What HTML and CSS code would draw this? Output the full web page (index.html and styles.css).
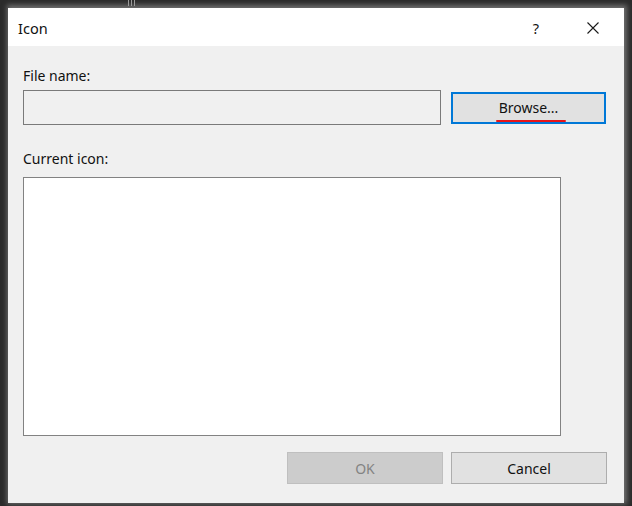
FILE: index.html
```html
<!DOCTYPE html>
<html>
<head>
<meta charset="utf-8">
<link rel="stylesheet" href="styles.css">
</head>
<body>
<div class="screen">
  <div class="grip"><span></span><span></span><span></span></div>
  <div class="dialog">
    <div class="titlebar">
      <div class="title">Icon</div>
      <div class="title-actions">
        <span class="help">?</span>
        <svg class="close" width="12" height="12" viewBox="0 0 12 12"><path d="M0.5 0.5 L11.5 11.5 M11.5 0.5 L0.5 11.5" stroke="#1a1a1a" stroke-width="1.1" fill="none"/></svg>
      </div>
    </div>
    <div class="content">
      <div class="label first">File name:</div>
      <div class="file-row">
        <div class="input"></div>
        <button class="btn focused"><span class="underline">Browse...</span></button>
      </div>
      <div class="label second">Current icon:</div>
      <div class="icon-box"></div>
      <div class="actions">
        <button class="btn disabled">OK</button>
        <button class="btn">Cancel</button>
      </div>
    </div>
  </div>
</div>
</body>
</html>
```
FILE: styles.css
```css
html, body {
  margin: 0;
  padding: 0;
  background: #2b2b2b;
}
.screen {
  position: relative;
  width: 632px;
  height: 506px;
  padding: 8px 0 0 8px;
  box-sizing: border-box;
  font-family: "Noto Sans", "Open Sans", sans-serif;
  color: #111111;
}
.grip {
  position: absolute;
  left: 128px;
  top: 0;
  display: flex;
  gap: 2px;
}
.grip span {
  display: block;
  width: 1px;
  height: 6px;
  background: #9a9a9a;
}
.dialog {
  width: 616px;
  height: 495px;
  background: #f0f0f0;
  box-shadow: 1px -1px 5px 2px rgba(170,170,170,0.55);
  display: flex;
  flex-direction: column;
}
.titlebar {
  height: 38px;
  background: #ffffff;
  display: flex;
  align-items: center;
  justify-content: space-between;
  padding: 0 25px 0 10px;
}
.title {
  font-size: 14.5px;
  line-height: 20px;
  margin-top: 1px;
}
.title-actions {
  display: flex;
  align-items: center;
  gap: 48px;
}
.help {
  font-size: 14.5px;
  line-height: 20px;
  margin-top: 1px;
}
.close {
  display: block;
  margin-top: 1px;
}
.content {
  flex: 1;
  padding: 20px 17px 0 15px;
  display: flex;
  flex-direction: column;
}
.label {
  font-size: 14px;
  line-height: 20px;
}
.label.first {
  margin-bottom: 4px;
}
.file-row {
  display: flex;
  align-items: center;
  gap: 10px;
}
.input {
  width: 418px;
  height: 35px;
  box-sizing: border-box;
  border: 1px solid #7a7a7a;
  background: #f0f0f0;
}
.btn {
  width: 156px;
  height: 32px;
  box-sizing: border-box;
  border: 1px solid #adadad;
  background: #e1e1e1;
  font-family: "Noto Sans", "Open Sans", sans-serif;
  font-size: 14px;
  color: #111111;
  padding: 0;
  margin: 0;
}
.btn.focused {
  width: 155px;
  border: 2px solid #0078d7;
}
.underline {
  display: inline-block;
  position: relative;
  padding: 0 3px;
  line-height: 20px;
}
.underline::after {
  content: "";
  position: absolute;
  left: 0;
  right: -5px;
  bottom: -4px;
  height: 2px;
  background: #e8141a;
  border-radius: 1px;
}
.label.second {
  margin-top: 24px;
  margin-bottom: 8px;
}
.icon-box {
  width: 538px;
  height: 259px;
  box-sizing: border-box;
  border: 1px solid #828282;
  background: #ffffff;
}
.actions {
  display: flex;
  justify-content: flex-end;
  gap: 8px;
  margin-top: 16px;
}
.btn.disabled {
  background: #cccccc;
  border-color: #bfbfbf;
  color: #838383;
}
```
